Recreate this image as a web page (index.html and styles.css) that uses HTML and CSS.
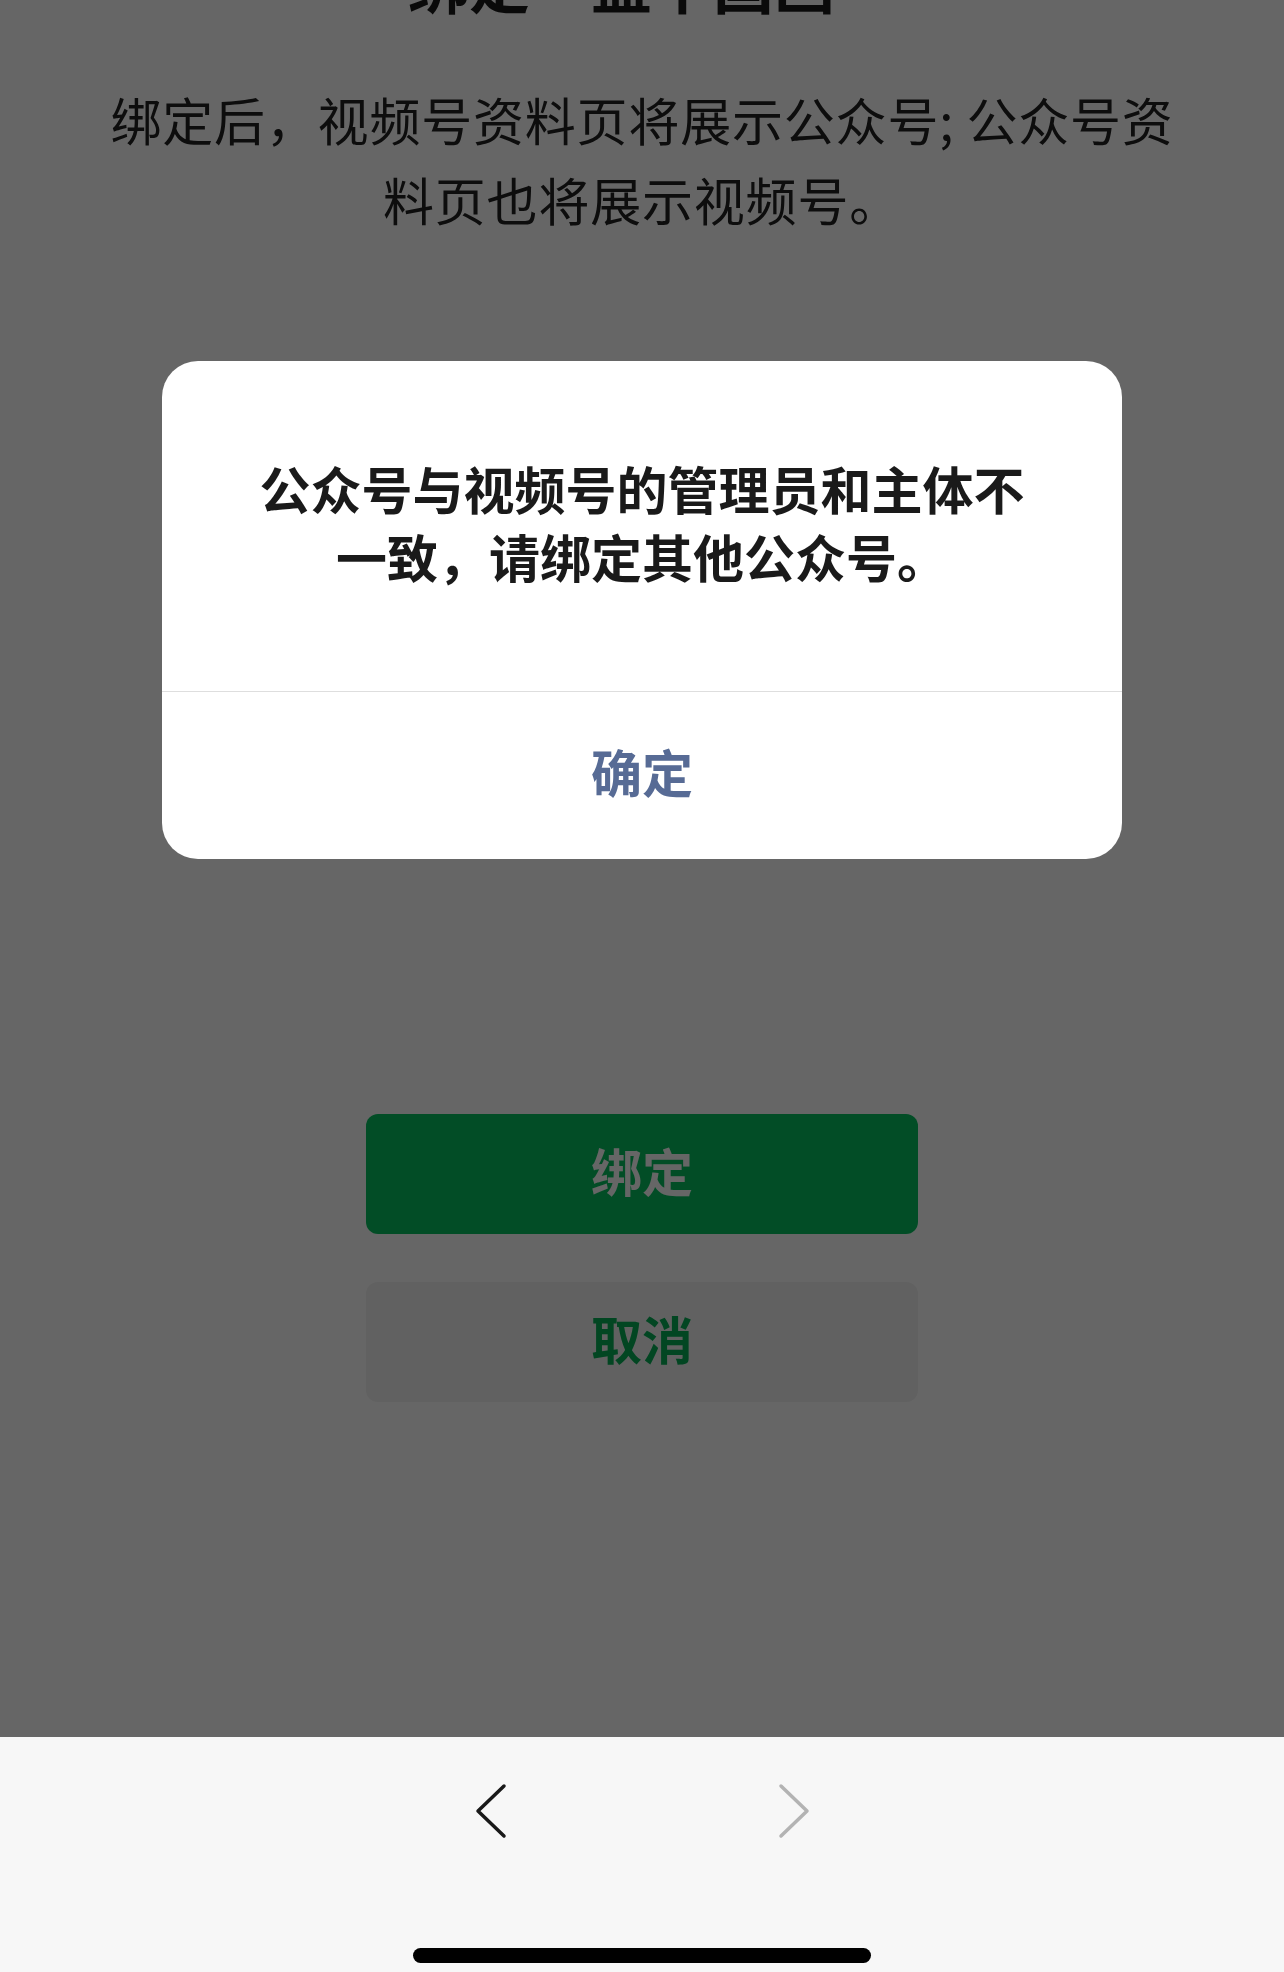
FILE: index.html
```html
<!DOCTYPE html>
<html lang="zh-CN">
<head>
    <meta charset="UTF-8">
    <meta name="viewport" content="width=device-width, initial-scale=1.0">
    <title>绑定公众号</title>
    <link rel="stylesheet" href="styles.css">
</head>
<body>
    <div class="page">
        <h1 class="title">绑定“益中国画”</h1>
        <p class="desc">绑定后，视频号资料页将展示公众号; 公众号资料页也将展示视频号。</p>

        <div class="actions">
            <button class="btn btn-primary">绑定</button>
            <button class="btn btn-default">取消</button>
        </div>
    </div>

    <!-- 弹窗遮罩 -->
    <div class="mask">
        <div class="dialog">
            <div class="dialog-body">公众号与视频号的管理员和主体不一致，请绑定其他公众号。</div>
            <div class="dialog-footer">
                <button class="dialog-btn">确定</button>
            </div>
        </div>
    </div>

    <div class="toolbar">
        <div class="nav">
            <button class="nav-btn" aria-label="后退">
                <svg width="40" height="60" viewBox="0 0 40 60">
                    <polyline points="33,5 7,30 33,55" fill="none" stroke="#191919" stroke-width="3.5" stroke-linecap="round" stroke-linejoin="round"/>
                </svg>
            </button>
            <button class="nav-btn" aria-label="前进">
                <svg width="40" height="60" viewBox="0 0 40 60">
                    <polyline points="7,5 33,30 7,55" fill="none" stroke="#b3b3b3" stroke-width="3.5" stroke-linecap="round" stroke-linejoin="round"/>
                </svg>
            </button>
        </div>
        <div class="home-indicator"></div>
    </div>
</body>
</html>
```

FILE: styles.css
```css
body {
    margin: 0;
    font-family: "Noto Sans CJK SC", "Noto Sans", sans-serif;
    background-color: #f7f7f7;
}
button {
    font-family: inherit;
    border: none;
    cursor: pointer;
    padding: 0;
}
.page {
    height: 1737px;
    overflow: hidden;
    background-color: #fff;
    display: flex;
    flex-direction: column;
    align-items: center;
}
.title {
    margin: -48px 0 0;
    padding-left: 20px;
    font-size: 61px;
    line-height: 61px;
    font-weight: bold;
    color: #1a1a1a;
}
.desc {
    margin: 66px 0 0;
    padding: 0 100px;
    font-size: 51px;
    line-height: 80px;
    letter-spacing: 0.8px;
    text-align: center;
    color: #222;
}
.actions {
    margin-top: 875px;
    display: flex;
    flex-direction: column;
    gap: 48px;
}
.btn {
    width: 552px;
    height: 120px;
    padding-bottom: 8px;
    border-radius: 12px;
    font-size: 51px;
    font-weight: bold;
}
.btn-primary {
    background-color: #07c160;
    color: #fff;
}
.btn-default {
    background-color: #f2f2f2;
    color: #06ae56;
}
.mask {
    position: fixed;
    top: 0;
    left: 0;
    right: 0;
    height: 1737px;
    background-color: rgba(0, 0, 0, 0.6);
    display: flex;
    flex-direction: column;
    align-items: center;
    padding-top: 361px;
    box-sizing: border-box;
}
.dialog {
    width: 960px;
    background-color: #fff;
    border-radius: 36px;
    overflow: hidden;
}
.dialog-body {
    padding: 93px 80px 101px;
    font-size: 51px;
    line-height: 68px;
    font-weight: bold;
    text-align: center;
    color: #1a1a1a;
}
.dialog-footer {
    border-top: 1px solid #dedede;
    display: flex;
}
.dialog-btn {
    flex: 1;
    height: 167px;
    padding-bottom: 10px;
    background: none;
    font-size: 51px;
    font-weight: bold;
    color: #576b95;
}
.toolbar {
    height: 235px;
    background-color: #f7f7f7;
    display: flex;
    flex-direction: column;
    align-items: center;
    padding-top: 44px;
    box-sizing: border-box;
}
.nav {
    display: flex;
    gap: 183px;
}
.nav-btn {
    width: 120px;
    height: 60px;
    background: none;
    display: flex;
    justify-content: center;
}
.home-indicator {
    margin-top: 107px;
    width: 458px;
    height: 15px;
    border-radius: 8px;
    background-color: #000;
}
```
